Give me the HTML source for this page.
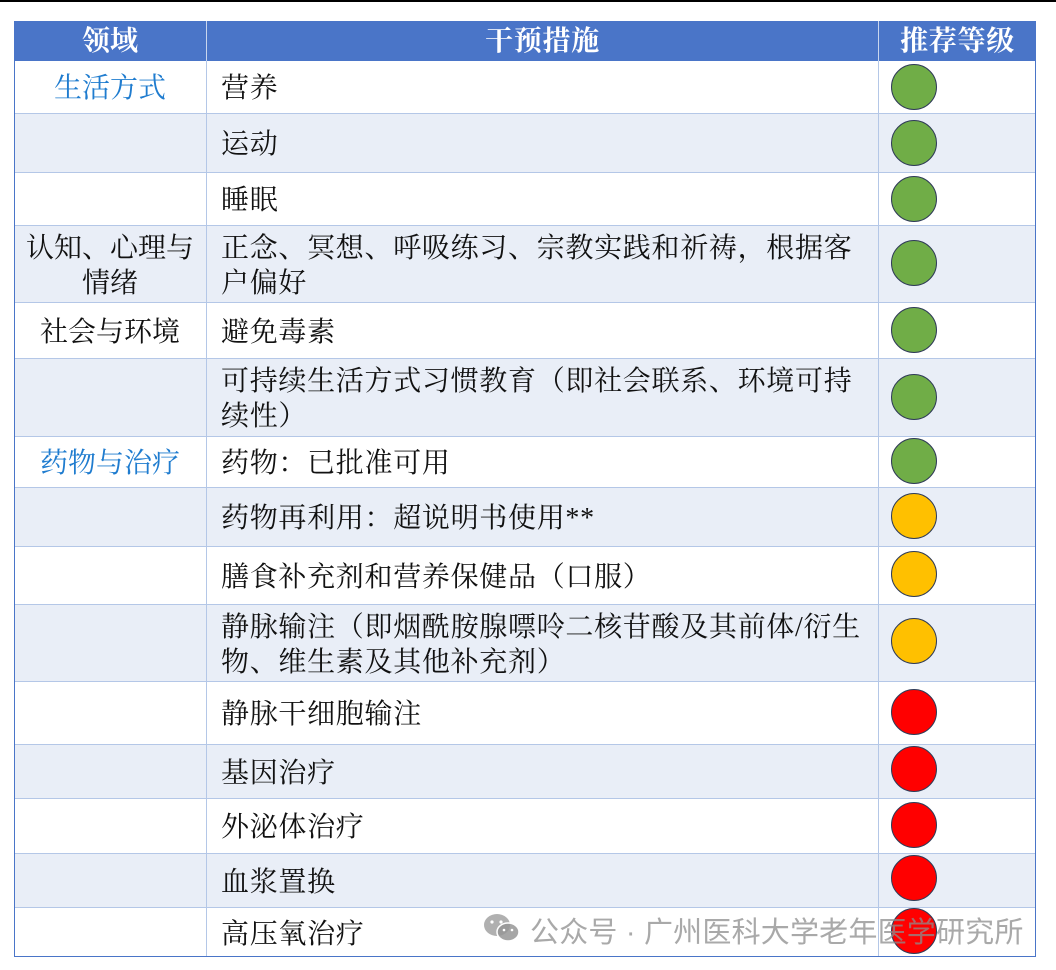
<!DOCTYPE html><html><head><meta charset="utf-8"><style>
body{margin:0;width:1056px;height:970px;background:#fff;position:relative;overflow:hidden;font-family:"Liberation Serif","Noto Serif CJK SC",serif;}
.top{position:absolute;left:0;top:0;width:1056px;height:2px;background:#000}
.r{position:absolute;left:14px;width:1022px;border-bottom:1px solid #b4c7e7;box-sizing:border-box}
.c{position:absolute;top:0;bottom:0;display:flex;align-items:center;font-size:28px;letter-spacing:0.7px;line-height:35px;color:#111;white-space:nowrap;padding-top:3px;box-sizing:border-box}
.a{left:0;width:193px;justify-content:center;text-align:center;border-right:1px solid #b4c7e7;letter-spacing:0}
.b{left:193px;width:672px;padding-left:14px;border-right:1px solid #b4c7e7}
.d{left:865px;width:157px;padding-top:0}
.dot{position:absolute;left:12px;width:46px;height:46px;border-radius:50%;border:1px solid #2f3b57;box-sizing:border-box}
.g{background:#70ad47}.y{background:#ffc000}.rd{background:#ff0000}
.hd{background:#4a75c8}.hd .c{color:#fff;font-weight:bold;font-size:28px;border-color:#c9d6ee;padding-top:0}
.blue{background:#e9eef7}
.bl{color:#1f7ccf!important}
.frame{position:absolute;left:14px;top:21px;width:1022px;height:936px;border:1px solid #4a75c8;border-top:none;box-sizing:border-box;pointer-events:none}
.wm{position:absolute;left:530px;top:909px;font-family:"Liberation Sans","Noto Sans CJK SC",sans-serif;font-size:29px;letter-spacing:0.2px;color:rgba(140,140,140,.75);white-space:nowrap}
</style></head><body>
<div class="top"></div>
<div class="r hd" style="top:21px;height:40px;border-bottom:none"><div class="c a" style="border-color:#c9d6ee">领域</div><div class="c b" style="justify-content:center;padding:0">干预措施</div><div class="c d" style="justify-content:center">推荐等级</div></div>

<div class="r" style="top:61px;height:53px"><div class="c a bl">生活方式</div><div class="c b">营养</div><div class="c d"><div class="dot g" style="top:3px"></div></div></div>
<div class="r blue" style="top:114px;height:59px"><div class="c a"></div><div class="c b">运动</div><div class="c d"><div class="dot g" style="top:6px"></div></div></div>
<div class="r" style="top:173px;height:53px"><div class="c a"></div><div class="c b">睡眠</div><div class="c d"><div class="dot g" style="top:3px"></div></div></div>
<div class="r blue" style="top:226px;height:77px"><div class="c a">认知、心理与<br>情绪</div><div class="c b">正念、冥想、呼吸练习、宗教实践和祈祷，根据客<br>户偏好</div><div class="c d"><div class="dot g" style="top:14px"></div></div></div>
<div class="r" style="top:303px;height:56px"><div class="c a">社会与环境</div><div class="c b">避免毒素</div><div class="c d"><div class="dot g" style="top:4px"></div></div></div>
<div class="r blue" style="top:359px;height:78px"><div class="c a"></div><div class="c b">可持续生活方式习惯教育（即社会联系、环境可持<br>续性）</div><div class="c d"><div class="dot g" style="top:15px"></div></div></div>
<div class="r" style="top:437px;height:51px"><div class="c a bl">药物与治疗</div><div class="c b">药物：已批准可用</div><div class="c d"><div class="dot g" style="top:1px"></div></div></div>
<div class="r blue" style="top:488px;height:59px"><div class="c a"></div><div class="c b">药物再利用：超说明书使用**</div><div class="c d"><div class="dot y" style="top:5px"></div></div></div>
<div class="r" style="top:547px;height:58px"><div class="c a"></div><div class="c b">膳食补充剂和营养保健品（口服）</div><div class="c d"><div class="dot y" style="top:4px"></div></div></div>
<div class="r blue" style="top:605px;height:77px"><div class="c a"></div><div class="c b">静脉输注（即烟酰胺腺嘌呤二核苷酸及其前体/衍生<br>物、维生素及其他补充剂）</div><div class="c d"><div class="dot y" style="top:13px"></div></div></div>
<div class="r" style="top:682px;height:63px"><div class="c a"></div><div class="c b">静脉干细胞输注</div><div class="c d"><div class="dot rd" style="top:7px"></div></div></div>
<div class="r blue" style="top:745px;height:54px"><div class="c a"></div><div class="c b">基因治疗</div><div class="c d"><div class="dot rd" style="top:1px"></div></div></div>
<div class="r" style="top:799px;height:55px"><div class="c a"></div><div class="c b">外泌体治疗</div><div class="c d"><div class="dot rd" style="top:3px"></div></div></div>
<div class="r blue" style="top:854px;height:54px"><div class="c a"></div><div class="c b">血浆置换</div><div class="c d"><div class="dot rd" style="top:1px"></div></div></div>
<div class="r" style="top:908px;height:49px;border-bottom:none"><div class="c a"></div><div class="c b">高压氧治疗</div><div class="c d"><div class="dot rd" style="top:0px"></div></div></div>
<div class="frame"></div>
<svg style="position:absolute;left:482px;top:912px" width="40" height="32" viewBox="0 0 40 32"><ellipse cx="15" cy="13" rx="13" ry="11" fill="rgba(150,150,150,.75)"/><ellipse cx="26" cy="20" rx="11" ry="9" fill="rgba(150,150,150,.85)" stroke="#fff" stroke-width="1.5"/><circle cx="10" cy="10" r="1.6" fill="#fff"/><circle cx="19" cy="10" r="1.6" fill="#fff"/><circle cx="22" cy="18" r="1.3" fill="#fff"/><circle cx="30" cy="18" r="1.3" fill="#fff"/></svg>
<div class="wm">公众号 · 广州医科大学老年医学研究所</div>
</body></html>
